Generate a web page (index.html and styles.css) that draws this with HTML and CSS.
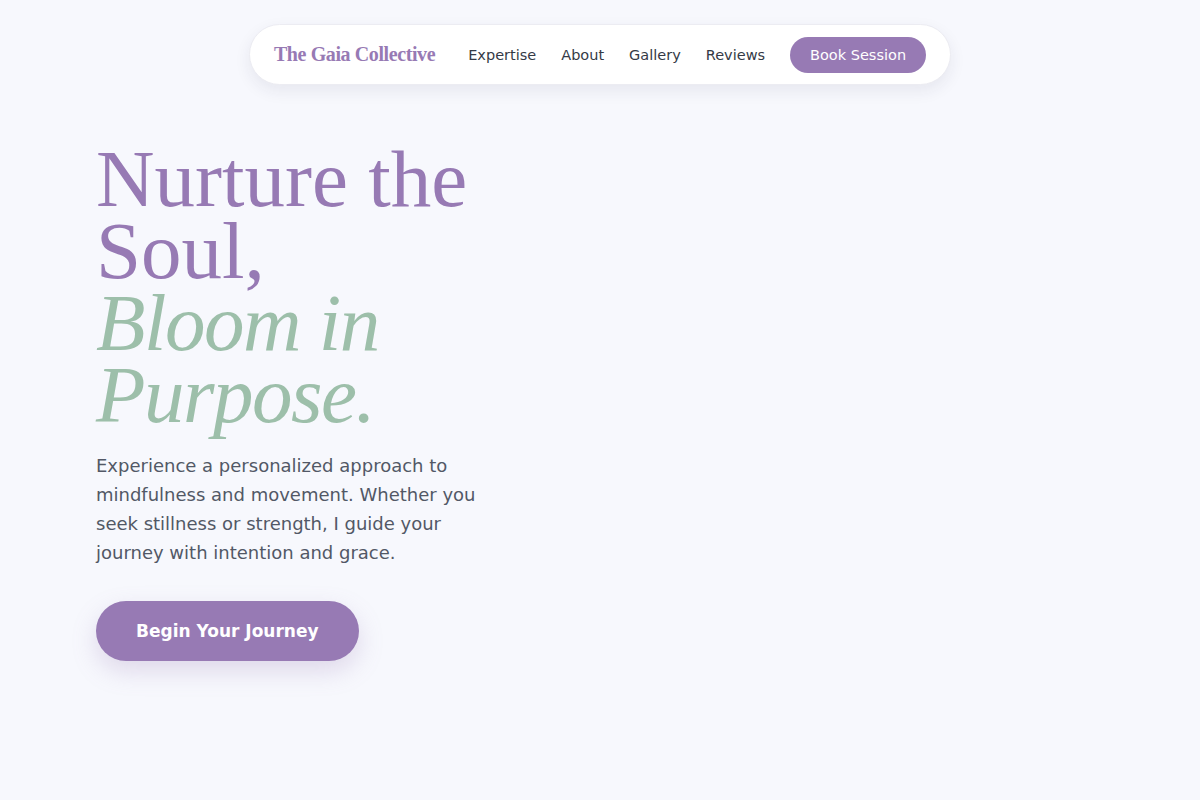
FILE: index.html
```html
<!DOCTYPE html>
<html>
    <head>
        <meta charset="utf-8">
        <link rel="stylesheet" href="styles.css">
    </head>
    <body>
        <header class="top">
            <nav class="pill">
                <a class="logo" href="#">The Gaia Collective</a>
                <ul class="links">
                    <li><a href="#">Expertise</a></li>
                    <li><a href="#">About</a></li>
                    <li><a href="#">Gallery</a></li>
                    <li><a href="#">Reviews</a></li>
                </ul>
                <a class="book" href="#">Book Session</a>
            </nav>
        </header>

        <section class="hero">
            <h1>Nurture the Soul,<br><em>Bloom in Purpose.</em></h1>
            <p>Experience a personalized approach to mindfulness and movement. Whether you seek stillness or strength, I guide your journey with intention and grace.</p>
            <a class="cta" href="#">Begin Your Journey</a>
        </section>
    </body>
</html>
```
FILE: styles.css
```css
body{
    margin: 0;
    background: #f7f8fd;
    font-family: 'DejaVu Sans', sans-serif;
    color: #525866;
}
body *{
    box-sizing: border-box;
}
a{
    text-decoration: none;
    color: inherit;
}

/* header */
.top{
    display: flex;
    justify-content: center;
    padding-top: 24px;
}
.pill{
    display: flex;
    align-items: center;
    height: 61px;
    padding: 0 24px;
    background: #fff;
    border: 1px solid #ececf2;
    border-radius: 31px;
    box-shadow: 0 6px 16px rgba(40, 40, 80, .08);
}
.logo{
    font-family: 'Liberation Serif', serif;
    font-weight: bold;
    font-size: 20px;
    color: #977ab4;
    letter-spacing: -.4px;
    margin-right: 33px;
}
.links{
    display: flex;
    gap: 25px;
    list-style: none;
    margin: 0 25px 0 0;
    padding: 0;
}
.links a{
    font-size: 14.5px;
    color: #343a46;
}
.book{
    display: inline-block;
    height: 36px;
    line-height: 36px;
    padding: 0 20px;
    border-radius: 18px;
    background: #977ab4;
    color: #fff;
    font-size: 14.5px;
}

/* hero */
.hero{
    width: 400px;
    margin-left: 96px;
    padding: 58px 0 120px;
}
h1{
    margin: 0;
    font-family: 'Liberation Serif', serif;
    font-weight: normal;
    font-size: 81px;
    line-height: 72px;
    color: #977ab4;
}
h1 em{
    color: #9dbfaa;
    letter-spacing: -1.5px;
}
.hero p{
    margin: 20px 0 0;
    font-size: 18px;
    line-height: 29px;
    width: 400px;
}
.cta{
    display: inline-block;
    margin-top: 34px;
    height: 60px;
    line-height: 60px;
    padding: 0 40px;
    border-radius: 30px;
    background: #977ab4;
    color: #fff;
    font-weight: bold;
    font-size: 17px;
    box-shadow: 0 10px 24px rgba(151, 122, 180, .25);
}
```
